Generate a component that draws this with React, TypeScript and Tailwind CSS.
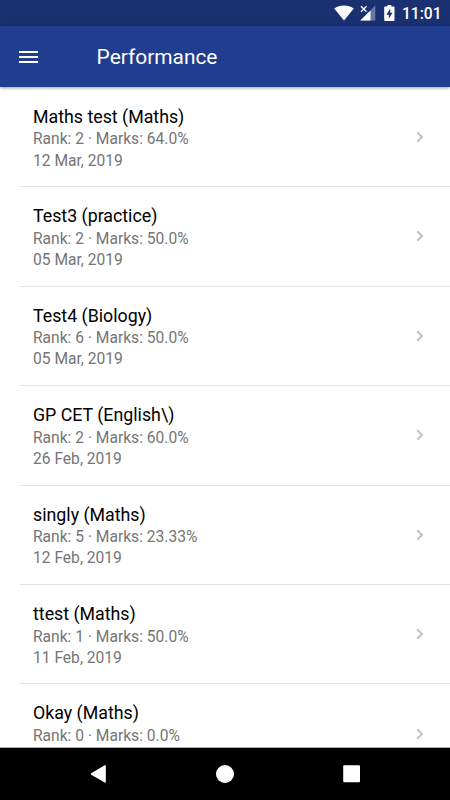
type Result = {
  title: string;
  rank: number;
  marks: string;
  date?: string;
};

const results: Result[] = [
  { title: "Maths test (Maths)", rank: 2, marks: "64.0%", date: "12 Mar, 2019" },
  { title: "Test3 (practice)", rank: 2, marks: "50.0%", date: "05 Mar, 2019" },
  { title: "Test4 (Biology)", rank: 6, marks: "50.0%", date: "05 Mar, 2019" },
  { title: "GP CET (English\\)", rank: 2, marks: "60.0%", date: "26 Feb, 2019" },
  { title: "singly (Maths)", rank: 5, marks: "23.33%", date: "12 Feb, 2019" },
  { title: "ttest (Maths)", rank: 1, marks: "50.0%", date: "11 Feb, 2019" },
  { title: "Okay (Maths)", rank: 0, marks: "0.0%" },
];

function StatusBar() {
  return (
    <div className="flex h-[26px] shrink-0 items-center justify-end bg-[#1b3070] text-white">
      <svg className="mr-[6px]" width="20" height="16" viewBox="0 0 20 16" fill="currentColor">
        <path d="M10 15.5 L0.2 3.6 C5.5 -0.6 14.5 -0.6 19.8 3.6 Z" />
      </svg>
      <svg className="mr-[8px]" width="16" height="16" viewBox="0 0 16 16">
        <path d="M15.3 0.5 V15.6 H0.3 L7.6 8.3 V7.2 H8.7 Z" fill="#fff" fillOpacity="0.35" />
        <path d="M10.5 5.4 V15.6 H0.3 Z" fill="#fff" />
        <path d="M1 1.2 L6.5 6.7 M6.5 1.2 L1 6.7" stroke="#fff" strokeWidth="1.3" />
      </svg>
      <svg className="mr-[7px]" width="11" height="16" viewBox="0 0 11 16">
        <path d="M3.4 0 H7.3 V1.6 H9.5 Q10.5 1.6 10.5 2.6 V15 Q10.5 16 9.5 16 H1.2 Q0.2 16 0.2 15 V2.6 Q0.2 1.6 1.2 1.6 H3.4 Z" fill="#fff" />
        <path d="M6.3 3.6 L2.4 9.7 H4.8 V13.7 L8.5 7.8 H6.3 Z" fill="#1b3070" />
      </svg>
      <span className="w-[48px] pt-[3px] text-[15.6px] leading-[23px] font-medium">11:01</span>
    </div>
  );
}

function Header() {
  return (
    <header className="z-10 flex h-[61px] shrink-0 items-center bg-[#203d8f] pl-[19px] text-white shadow-[0_1px_3px_rgba(0,0,0,0.4)]">
      <button className="flex w-[19px] flex-col gap-[3px]">
        <span className="h-[2px] w-full bg-white" />
        <span className="h-[2px] w-full bg-white" />
        <span className="h-[2px] w-full bg-white" />
      </button>
      <h1 className="ml-[58.6px] text-[20.9px] leading-7">Performance</h1>
    </header>
  );
}

function ResultRow({ title, rank, marks, date }: Result) {
  return (
    <li className="ml-[19.5px] flex h-[99.45px] shrink-0 items-center justify-between border-b border-[#e1e1e1] pr-[26px] pl-[13.5px]">
      <div className="flex h-[64.4px] flex-col">
        <span className="text-[17.8px] leading-[24px] text-black">{title}</span>
        <span className="mt-[0.6px] text-[15.6px] leading-[21.2px] text-[#757575]">
          Rank: {rank} · Marks: {marks}
        </span>
        {date && <span className="text-[15.6px] leading-[21.2px] text-[#757575]">{date}</span>}
      </div>
      <svg width="8" height="12" viewBox="0 0 8 12" fill="none" stroke="#c2c2c6" strokeWidth="2">
        <path d="M1.2 1.2 L6 6 L1.2 10.8" />
      </svg>
    </li>
  );
}

function NavBar() {
  return (
    <nav className="z-10 h-[53px] shrink-0 border-t border-[#aaa] bg-black">
      <svg width="450" height="52" viewBox="0 0 450 52" fill="#fff">
        <path d="M105.8 18 V34 Q105.8 35.2 104.7 34.6 L91.2 26.8 Q90.2 26 91.2 25.2 L104.7 17.2 Q105.8 16.7 105.8 18 Z" />
        <circle cx="225" cy="26" r="9" />
        <rect x="343.2" y="17.2" width="16.8" height="17" rx="1" />
      </svg>
    </nav>
  );
}

export default function App() {
  return (
    <div className="flex h-[800px] w-[450px] flex-col overflow-hidden bg-white font-['Roboto',sans-serif]">
      <StatusBar />
      <Header />
      <ul className="flex min-h-0 flex-1 flex-col overflow-hidden pt-[0.8px]">
        {results.map((result) => (
          <ResultRow key={result.title} {...result} />
        ))}
      </ul>
      <NavBar />
    </div>
  );
}
